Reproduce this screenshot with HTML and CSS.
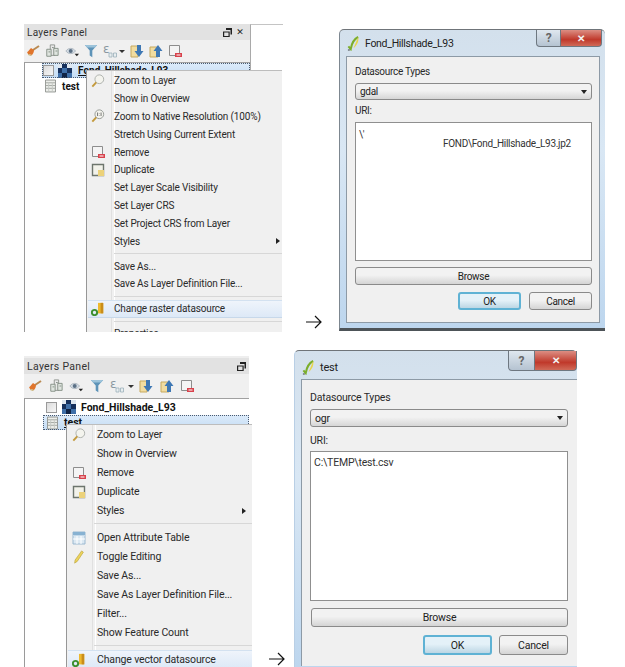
FILE: index.html
```html
<!DOCTYPE html>
<html lang="en">
<head>
<meta charset="utf-8">
<title>Change datasource</title>
<link rel="stylesheet" href="styles.css">
</head>
<body>
<svg class="defs" width="0" height="0" aria-hidden="true">
  <defs>
    <symbol id="i-brush" viewBox="0 0 14 14"><path d="M13 2 7 6" stroke="#b98a52" stroke-width="2"/><path d="M8 6 5 4C3 6 2 8 1 8l1 2 4 1c1-1 2-3 2-5Z" fill="#e0752c"/><path d="M2 10l4 1-1 1-3-1Z" fill="#c9b074"/></symbol>
    <symbol id="i-add" viewBox="0 0 16 16"><path d="M6 1h5v12H6Z" fill="#e8e8e8" stroke="#8a8f8a"/><path d="M2 6h5v8H2ZM10 5h5v8h-5Z" fill="#dfe5df" stroke="#7f8a80"/><path d="M4 9h2M12 8h2M8 4h2" stroke="#7f8a80"/></symbol>
    <symbol id="i-eye" viewBox="0 0 16 14"><path d="M1 7c3-4 8-4 11 0-3 4-8 4-11 0Z" fill="#d4dce4" stroke="#a8b2bb"/><circle cx="6.500" cy="7" r="2.300" fill="#5c7186"/><path d="M11 10h5l-2.500 3Z" fill="#222"/></symbol>
    <symbol id="i-filter" viewBox="0 0 14 16"><path d="M0 1h14L8.500 7.500V15l-3-2V7.500Z" fill="#5d93b8"/><path d="M0 1h14l-2.500 3h-9Z" fill="#9cc3da"/></symbol>
    <symbol id="i-eps" viewBox="0 0 14 14"><text x="0" y="9" class="eps">&#949;</text><path d="M6 9h3v4H6ZM10.500 9h3v4h-3Z" fill="#e8eef0" stroke="#9cb0ba" stroke-width=".8"/></symbol>
    <symbol id="i-down" viewBox="0 0 14 14"><path d="M1 2h7v11H1Z" fill="#f1dca0" stroke="#c6a95e"/><path d="M7 1h4v6h2.500L9 13 4.500 7H7Z" fill="#3f78b4"/></symbol>
    <symbol id="i-up" viewBox="0 0 14 14"><path d="M1 3h8v10H1Z" fill="#f1dca0" stroke="#c6a95e"/><path d="M7 13V7H4.500L9 1l4.500 6H11v6Z" fill="#3f78b4"/></symbol>
    <symbol id="i-remove" viewBox="0 0 14 14"><path d="M1.500 1.500h10v10h-10Z" fill="#f4f4f4" stroke="#8d8d8d"/><path d="M7 9h7v4H7Z" fill="#d8424c"/><path d="M8.500 11h4" stroke="#fff"/></symbol>
    <symbol id="i-zoom" viewBox="0 0 16 16"><circle cx="9.500" cy="6" r="5" fill="#f4f4ee" stroke="#a6aaa6"/><path d="M6 9.500 1.500 14.500" stroke="#c49a3c" stroke-width="2.200"/></symbol>
    <symbol id="i-native" viewBox="0 0 16 16"><circle cx="9.500" cy="6" r="5" fill="#f4f4ee" stroke="#8f948f"/><path d="M7.500 4v4M11.500 4v4M9.500 5v.5M9.500 7v.5" stroke="#666"/><path d="M6 9.500 1.500 14.500" stroke="#c49a3c" stroke-width="2.200"/></symbol>
    <symbol id="i-dup" viewBox="0 0 14 14"><path d="M1.500 1.500h11v11h-11Z" fill="#f2f2ea" stroke="#6d756d" stroke-width="1.400"/><path d="M7 7h6v6H7Z" fill="#ecd27a"/></symbol>
    <symbol id="i-source" viewBox="0 0 16 16"><path d="M8 1h6v12H8Z" fill="#eeb92e"/><path d="M11 1h3v12h-3Z" fill="#c98d1c"/><circle cx="4" cy="12" r="3" fill="none" stroke="#3d8f2f" stroke-width="2.200"/></symbol>
    <symbol id="i-table" viewBox="0 0 14 14"><path d="M1 1h12v12H1Z" fill="#dbe8f2" stroke="#9ab8d0"/><path d="M1 4.500h12M1 8h12M5 4v9M9 4v9" stroke="#fff"/><path d="M1 1h12v3.500H1Z" fill="#88b2d2"/></symbol>
    <symbol id="i-pencil" viewBox="0 0 12 16"><path d="M9 1l2 1.500L4 13l-3 2 .5-3.500Z" fill="#ecd35c" stroke="#b9a23a" stroke-width=".7"/></symbol>
    <symbol id="i-raster" viewBox="0 0 14 14"><path d="M0 0h14v14H0Z" fill="#dfe7ef"/><path d="M4 0h5v4H4ZM9 4h5v5H9ZM0 4h4v5H0Z" fill="#16305c"/><path d="M4 4h5v5H4ZM0 9h4v5H0ZM9 9h5v5H9Z" fill="#3f6fa8"/><path d="M4 9h5v5H4Z" fill="#0f2345"/></symbol>
    <symbol id="i-tablelayer" viewBox="0 0 12 14"><path d="M.5.500h11v13H.5Z" fill="#eceeea" stroke="#8d918c"/><path d="M1 3.500h10M1 6.500h10M1 9.500h10" stroke="#9fa39e"/><path d="M4 3v10M8 3v10" stroke="#c5c8c4"/></symbol>
    <symbol id="i-qgis" viewBox="0 0 14 16"><path d="M12 1C8 3 5 8 4 14L1.500 11" fill="none" stroke="#7cae2c" stroke-width="2.200"/><path d="M12 1c1 4-1 9-5 12" fill="#e9d64c"/><path d="M1 15h2" stroke="#333"/></symbol>
    <symbol id="i-arrow" viewBox="0 0 16 14"><path d="M0 7h15M9 1l6 6-6 6" fill="none" stroke="#111" stroke-width="1.200"/></symbol>
    <symbol id="i-dock" viewBox="0 0 9 9"><path d="M3 1h5.500v5.500" fill="none" stroke="#222" stroke-width="2"/><path d="M.6 4h5.500v4.500H.6Z" fill="none" stroke="#222" stroke-width="1.200"/></symbol>
  </defs>
</svg>

<section class="sliver"></section>

<section class="panel panel-a">
  <header class="panel-title"><span>Layers Panel</span><span class="panel-controls"><svg class="dock"><use href="#i-dock"/></svg><span class="close">&#10005;</span></span></header>
  <div class="toolbar">
    <svg class="ti"><use href="#i-brush"/></svg>
    <svg class="ti"><use href="#i-add"/></svg>
    <svg class="ti"><use href="#i-eye"/></svg>
    <svg class="ti"><use href="#i-filter"/></svg>
    <svg class="ti"><use href="#i-eps"/></svg>
    <span class="drop"></span>
    <svg class="ti"><use href="#i-down"/></svg>
    <svg class="ti"><use href="#i-up"/></svg>
    <svg class="ti"><use href="#i-remove"/></svg>
  </div>
  <div class="tree">
    <div class="layer selected raster-row"><span class="check"></span><svg class="li"><use href="#i-raster"/></svg><span class="lname">Fond_Hillshade_L93</span></div>
    <div class="layer vector-row"><svg class="lv"><use href="#i-tablelayer"/></svg><span class="lname plain">test</span></div>
  </div>
</section>

<nav class="menu menu-a">
  <div class="row"><svg class="mi"><use href="#i-zoom"/></svg><span>Zoom to Layer</span></div>
  <div class="row"><span class="mi"></span><span>Show in Overview</span></div>
  <div class="row"><svg class="mi"><use href="#i-native"/></svg><span>Zoom to Native Resolution (100%)</span></div>
  <div class="row"><span class="mi"></span><span>Stretch Using Current Extent</span></div>
  <div class="row"><svg class="mi"><use href="#i-remove"/></svg><span>Remove</span></div>
  <div class="row"><svg class="mi"><use href="#i-dup"/></svg><span>Duplicate</span></div>
  <div class="row"><span class="mi"></span><span>Set Layer Scale Visibility</span></div>
  <div class="row"><span class="mi"></span><span>Set Layer CRS</span></div>
  <div class="row"><span class="mi"></span><span>Set Project CRS from Layer</span></div>
  <div class="row sub"><span class="mi"></span><span>Styles</span></div>
  <div class="sep"></div>
  <div class="row"><span class="mi"></span><span>Save As...</span></div>
  <div class="row"><span class="mi"></span><span>Save As Layer Definition File...</span></div>
  <div class="sep"></div>
  <div class="row hot"><svg class="mi"><use href="#i-source"/></svg><span>Change raster datasource</span></div>
  <div class="sep"></div>
  <div class="row"><span class="mi"></span><span>Properties</span></div>
</nav>

<svg class="arrow arrow-a"><use href="#i-arrow"/></svg>

<section class="dialog dialog-a">
  <header class="dlg-title"><svg class="qgis"><use href="#i-qgis"/></svg><span>Fond_Hillshade_L93</span></header>
  <div class="dlg-buttons"><span class="help">?</span><span class="shut">&#10005;</span></div>
  <div class="dlg-body">
    <label class="lbl">Datasource Types</label>
    <div class="combo"><span>gdal</span><i class="caret"></i></div>
    <label class="lbl">URI:</label>
    <div class="uri"><div>\'</div><div class="uri-rest">FOND\Fond_Hillshade_L93.jp2</div></div>
    <div class="btn browse">Browse</div>
    <div class="actions"><div class="btn ok">OK</div><div class="btn cancel">Cancel</div></div>
  </div>
</section>

<section class="panel panel-b">
  <header class="panel-title"><span>Layers Panel</span><span class="panel-controls"><svg class="dock"><use href="#i-dock"/></svg></span></header>
  <div class="toolbar">
    <svg class="ti"><use href="#i-brush"/></svg>
    <svg class="ti"><use href="#i-add"/></svg>
    <svg class="ti"><use href="#i-eye"/></svg>
    <svg class="ti"><use href="#i-filter"/></svg>
    <svg class="ti"><use href="#i-eps"/></svg>
    <span class="drop"></span>
    <svg class="ti"><use href="#i-down"/></svg>
    <svg class="ti"><use href="#i-up"/></svg>
    <svg class="ti"><use href="#i-remove"/></svg>
  </div>
  <div class="tree">
    <div class="layer raster-row"><span class="check"></span><svg class="li"><use href="#i-raster"/></svg><span class="lname plain">Fond_Hillshade_L93</span></div>
    <div class="layer selected vector-row"><svg class="lv"><use href="#i-tablelayer"/></svg><span class="lname">test</span></div>
  </div>
</section>

<nav class="menu menu-b">
  <div class="row"><svg class="mi"><use href="#i-zoom"/></svg><span>Zoom to Layer</span></div>
  <div class="row"><span class="mi"></span><span>Show in Overview</span></div>
  <div class="row"><svg class="mi"><use href="#i-remove"/></svg><span>Remove</span></div>
  <div class="row"><svg class="mi"><use href="#i-dup"/></svg><span>Duplicate</span></div>
  <div class="row sub"><span class="mi"></span><span>Styles</span></div>
  <div class="sep"></div>
  <div class="row"><svg class="mi"><use href="#i-table"/></svg><span>Open Attribute Table</span></div>
  <div class="row"><svg class="mi"><use href="#i-pencil"/></svg><span>Toggle Editing</span></div>
  <div class="row"><span class="mi"></span><span>Save As...</span></div>
  <div class="row"><span class="mi"></span><span>Save As Layer Definition File...</span></div>
  <div class="row"><span class="mi"></span><span>Filter...</span></div>
  <div class="row"><span class="mi"></span><span>Show Feature Count</span></div>
  <div class="sep"></div>
  <div class="row hot"><svg class="mi"><use href="#i-source"/></svg><span>Change vector datasource</span></div>
</nav>

<svg class="arrow arrow-b"><use href="#i-arrow"/></svg>

<section class="dialog dialog-b">
  <header class="dlg-title"><svg class="qgis"><use href="#i-qgis"/></svg><span>test</span></header>
  <div class="dlg-buttons"><span class="help">?</span><span class="shut">&#10005;</span></div>
  <div class="dlg-body">
    <label class="lbl">Datasource Types</label>
    <div class="combo"><span>ogr</span><i class="caret"></i></div>
    <label class="lbl">URI:</label>
    <div class="uri"><div>C:\TEMP\test.csv</div></div>
    <div class="btn browse">Browse</div>
    <div class="actions"><div class="btn ok">OK</div><div class="btn cancel">Cancel</div></div>
  </div>
</section>
</body>
</html>
```

FILE: styles.css
```css
* { box-sizing: border-box; }

html, body { margin: 0; padding: 0; }

body {
  position: relative;
  width: 625px;
  height: 667px;
  overflow: hidden;
  background: #fff;
  color: #222;
  font-family: Roboto, "Open Sans", sans-serif;
  font-size: 10px;
}

.defs { position: absolute; }

.eps { font-family: "DejaVu Sans", sans-serif; font-size: 12px; fill: #8a97a0; }

/* canvas items */
.sliver, .panel, .menu, .dialog, .arrow { position: absolute; }

.sliver {
  left: 250px; top: 24px; width: 33px; height: 47px;
  border-left: 1px solid #a9a9a9;
  border-top: 1px solid #c4c4c4;
}

/* layers panel */
.panel {
  display: flex;
  flex-direction: column;
  background: #f0f0f0;
  overflow: hidden;
}
.panel-a { left: 24px; top: 24px; width: 226px; height: 308px; }
.panel-b { left: 24px; top: 356px; width: 225px; height: 311px; }

.panel-title {
  display: flex;
  align-items: center;
  justify-content: space-between;
  flex: none;
  padding: 0 6px 0 3px;
  background: #e2e2e2;
  color: #333;
  letter-spacing: .3px;
}
.panel-a .panel-title { height: 16px; font-size: 10px; }
.panel-b .panel-title { height: 18px; border-top: 2px solid #eee; padding-right: 3px; font-size: 10.500px; }

.panel-controls { display: flex; align-items: center; gap: 4px; }
.dock { width: 9px; height: 9px; }
.close { font-size: 9px; line-height: 9px; color: #222; font-family: "DejaVu Sans", sans-serif; }

.toolbar { display: flex; align-items: center; flex: none; background: #f0f0f0; }
.panel-a .toolbar { height: 22px; gap: 5.300px; padding-left: 2px; }
.panel-b .toolbar { height: 24px; gap: 6.500px; padding-left: 4px; }

.ti { width: 14px; height: 14px; flex: none; }
.drop {
  width: 0; height: 0;
  margin: 0 -1px 0 -3px;
  border: 3px solid transparent;
  border-top: 3px solid #333;
  border-bottom: 0;
}

.tree {
  flex: 1;
  background: #fff;
  border-top: 1px solid #a0a0a0;
  border-left: 1px solid #9a9a9a;
  display: flex;
  flex-direction: column;
}

.layer { display: flex; align-items: center; flex: none; color: #111; font-weight: 700; }
.lname { text-decoration: underline; white-space: nowrap; }
.lname.plain { text-decoration: none; }
.selected {
  background: linear-gradient(#dcebfa, #c4dcf4);
  outline: 1px dotted #4a5a70;
  outline-offset: -1px;
}
.check {
  width: 11px; height: 11px; flex: none;
  border: 1px solid #9a9a9a;
  background: linear-gradient(135deg, #dcdcdc, #f6f6f6);
}
.li { width: 14px; height: 14px; flex: none; }
.lv { width: 11px; height: 14px; flex: none; }

.panel-a .raster-row { height: 15px; margin-left: 17px; padding-left: 1px; gap: 4px; }
.panel-a .raster-row .lname { margin-left: 2px; }
.panel-a .vector-row { height: 16px; margin-left: 20px; gap: 6px; }
.panel-a .lname { font-size: 10px; }

.panel-b .raster-row { height: 16px; margin-left: 21px; gap: 5px; }
.panel-b .raster-row .lname { margin-left: 0; }
.panel-b .vector-row { height: 15px; margin-left: 18px; padding-left: 4px; gap: 6px; }
.panel-b .lname { font-size: 10.500px; }

/* context menus */
.menu {
  background: #f0f0f0;
  color: #2a2a2a;
  border-left: 1px solid #979797;
  border-top: 1px solid #bdbdbd;
  overflow: hidden;
}
.menu::before {
  content: "";
  position: absolute;
  top: 0; bottom: 0;
  border-left: 1px solid #e0e0e0;
  border-right: 1px solid #fff;
  width: 2px;
}
.menu-a { left: 86px; top: 70px; width: 196px; height: 262px; padding-top: 1px; font-size: 10px; letter-spacing: -.15px; }
.menu-a::before { left: 24px; }
.menu-b { left: 66px; top: 424px; width: 186px; height: 243px; font-size: 10.500px; letter-spacing: -.15px; }
.menu-b::before { left: 25px; }

.row { position: relative; display: flex; align-items: center; white-space: nowrap; }
.menu-a .row { height: 17.800px; }
.menu-b .row { height: 19px; }

.mi { width: 14px; height: 14px; flex: none; }
.menu-a .mi { margin: 0 9px 0 4px; }
.menu-b .mi { margin: 0 11px 0 5px; }

.sub::after {
  content: "";
  position: absolute;
  top: 50%;
  margin-top: -3px;
  border: 3px solid transparent;
  border-left: 4px solid #222;
  border-right: 0;
}
.menu-a .sub::after { right: 2px; }
.menu-b .sub::after { right: 6px; }

.sep { position: relative; }
.menu-a .sep { height: 7.200px; }
.menu-b .sep { height: 8px; }
.sep::after {
  content: "";
  position: absolute;
  left: 27px; right: 0; top: 3px;
  border-top: 1px solid #d7d7d7;
}

.hot {
  margin: 0 0 0 1px;
  background: linear-gradient(#eff4fb, #dde9f7);
  border-top: 1px solid #d3e1f0;
  border-bottom: 1px solid #c7d8ea;
}
.menu-a .hot .mi { margin-left: 3px; }
.menu-b .hot .mi { margin-left: 4px; }

/* dialogs */
.dialog {
  background: linear-gradient(#d3e0ec, #d9e7f4 40%, #bdd6ee);
  border-top: 1px solid #6f7479;
  border-radius: 5px 5px 0 0;
  color: #2a2a2a;
}
.dialog-a {
  left: 339px; top: 29px; width: 266px; height: 302px;
  border-bottom: 3px solid #4d5358;
  border-left: 1px solid #7d8790;
  padding: 26px 5px 5px 6px;
  font-size: 10px;
  letter-spacing: -.3px;
}
.dialog-b {
  left: 294px; top: 350px; width: 283px; height: 317px;
  padding: 28px 0 1px 6px;
  border-left: 1px solid #b9cfe5;
  font-size: 10.500px;
  letter-spacing: -.2px;
}

.dlg-title {
  position: absolute;
  top: 0; left: 0; right: 0;
  display: flex;
  align-items: center;
  gap: 5px;
  padding-left: 7px;
  color: #222;
}
.dialog-a .dlg-title { height: 26px; font-size: 10.500px; }
.dialog-b .dlg-title { height: 32px; font-size: 11px; }
.qgis { width: 13px; height: 15px; flex: none; }

.dlg-buttons { position: absolute; top: 0; display: flex; height: 17px; }
.dialog-a .dlg-buttons { right: 3px; }
.dialog-b .dlg-buttons { right: 0; height: 20px; }
.help, .shut {
  display: flex;
  align-items: center;
  justify-content: center;
  border: 1px solid #6e7780;
  border-top: 0;
  font-weight: 700;
}
.help {
  width: 25px;
  background: linear-gradient(#dfe7ef, #b5c3d1);
  color: #666;
  font-size: 12px;
  border-radius: 0 0 0 4px;
}
.shut {
  width: 41px;
  background: linear-gradient(#dc8e83, #c0392b 60%, #d06a58);
  color: #f3f3f3;
  font-size: 10px;
  border-left: 0;
  border-radius: 0 0 4px 0;
}
.dialog-b .help { width: 27px; }
.dialog-b .shut { width: 42px; }

.dlg-body {
  display: flex;
  flex-direction: column;
  height: 100%;
  background: #f0f0f0;
  border: 1px solid #8d9aa6;
}
.dialog-a .dlg-body { padding: 8px 7px 0 8px; }
.dialog-b .dlg-body { padding: 11px 9px 0 8px; border-right: 0; border-bottom: 0; }

.lbl { display: block; line-height: 14px; }
.dialog-a .combo { margin-top: 4px; height: 17px; }
.dialog-a .lbl + .uri { margin-top: 4px; height: 139px; }
.dialog-a .combo + .lbl { margin-top: 4px; }
.dialog-b .combo { margin-top: 4px; height: 18px; }
.dialog-b .lbl + .uri { margin-top: 3px; height: 150px; }
.dialog-b .combo + .lbl { margin-top: 7px; }

.combo {
  display: flex;
  align-items: center;
  justify-content: space-between;
  padding: 0 4px;
  background: linear-gradient(#f2f2f2 45%, #d6d6d6);
  border: 1px solid #8a8a8a;
  border-radius: 3px;
  color: #222;
}
.caret {
  width: 0; height: 0;
  border: 3.500px solid transparent;
  border-top: 4px solid #222;
  border-bottom: 0;
}

.uri {
  background: #fff;
  border: 1px solid #8f8f8f;
  padding: 4px 3px;
  color: #333;
}
.dialog-a .uri { padding-top: 6px; }
.uri-rest { padding-left: 84px; margin-top: -2px; }

.btn {
  display: flex;
  align-items: center;
  justify-content: center;
  background: linear-gradient(#f2f2f2 45%, #d4d4d4);
  border: 1px solid #8a8a8a;
  border-radius: 3px;
  color: #222;
}
.dialog-a .browse { margin-top: 6px; height: 18px; }
.dialog-b .browse { margin-top: 7px; height: 19px; margin-left: 1px; }

.actions { display: flex; justify-content: flex-end; }
.dialog-a .actions { margin-top: 7px; gap: 8px; }
.dialog-b .actions { margin-top: 8px; gap: 7px; }
.dialog-a .actions .btn { height: 18px; width: 63px; }
.dialog-b .actions .btn { height: 20px; width: 69px; }
.ok {
  border: 2px solid #5fb2d4;
  background: linear-gradient(#e4f1f8 45%, #bcd6e4);
}

.arrow { width: 16px; height: 14px; }
.arrow-a { left: 306px; top: 315px; }
.arrow-b { left: 269px; top: 652px; }
```
